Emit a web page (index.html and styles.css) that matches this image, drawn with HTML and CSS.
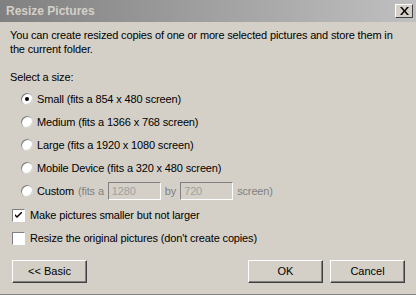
FILE: index.html
```html
<!DOCTYPE html>
<html lang="en">
<head>
    <meta charset="UTF-8">
    <title>Resize Pictures</title>
    <link rel="stylesheet" href="styles.css">
</head>
<body>
    <div class="dialog">
        <div class="titlebar">
            <span class="title">Resize Pictures</span>
            <span class="close">
                <svg width="9" height="8" viewBox="0 0 9 8">
                    <path d="M0 0h2l2.5 3 2.5-3h2l-3.5 4 3.5 4h-2l-2.5-3-2.5 3h-2l3.5-4z" fill="#000"/>
                </svg>
            </span>
        </div>

        <div class="body">
            <p class="intro">You can create resized copies of one or more selected pictures and store them in the current folder.</p>

            <p class="label">Select a size:</p>

            <div class="options">
                <label class="option"><span class="radio checked"></span>Small (fits a 854 x 480 screen)</label>
                <label class="option"><span class="radio"></span>Medium (fits a 1366 x 768 screen)</label>
                <label class="option"><span class="radio"></span>Large (fits a 1920 x 1080 screen)</label>
                <label class="option"><span class="radio"></span>Mobile Device (fits a 320 x 480 screen)</label>
                <label class="option custom">
                    <span class="radio"></span>Custom
                    <span class="muted">(fits a</span>
                    <span class="field">1280</span>
                    <span class="muted">by</span>
                    <span class="field">720</span>
                    <span class="muted">screen)</span>
                </label>
            </div>

            <label class="check-row first"><span class="check checked">
                <svg width="7" height="7" viewBox="0 0 7 7"><path d="M0 2l2 2 5-5v2l-5 5-2-2z" fill="#000"/></svg>
            </span>Make pictures smaller but not larger</label>
            <label class="check-row"><span class="check"></span>Resize the original pictures (don't create copies)</label>

            <div class="buttons">
                <button class="btn">&lt;&lt; Basic</button>
                <span class="spacer"></span>
                <button class="btn">OK</button>
                <button class="btn">Cancel</button>
            </div>
        </div>
    </div>
</body>
</html>
```

FILE: styles.css
```css
html, body {
    margin: 0;
    padding: 0;
}
body {
    width: 416px;
    height: 295px;
    background: #d4d0c8;
    font-family: "Liberation Sans", Arial, sans-serif;
    font-size: 11px;
    letter-spacing: -0.15px;
    color: #000;
    overflow: hidden;
}
.dialog {
    height: 294px;
    border-bottom: 1px solid #808080;
    display: flex;
    flex-direction: column;
}
.titlebar {
    height: 22px;
    background: linear-gradient(to right, #808080, #c0c0c0);
    display: flex;
    align-items: center;
    justify-content: space-between;
    padding: 0 3px 0 6px;
}
.title {
    color: #d4d0c8;
    font-weight: bold;
    font-size: 12px;
    letter-spacing: 0;
}
.close {
    width: 16px;
    height: 12px;
    background: #d4d0c8;
    border: 1px solid;
    border-color: #fff #404040 #404040 #fff;
    display: flex;
    align-items: center;
    justify-content: center;
}
.body {
    padding: 6px 8px 0 10px;
}
.intro {
    margin: 0;
    line-height: 14px;
}
.label {
    margin: 15px 0 0 0;
}
.options {
    padding-left: 11px;
    margin-top: 9px;
    display: flex;
    flex-direction: column;
    gap: 10.2px;
}
.option {
    display: flex;
    align-items: center;
    gap: 4px;
    height: 13px;
}
.radio {
    width: 12px;
    height: 12px;
    border-radius: 50%;
    background: #fff;
    box-shadow: inset 1px 1px 0 #808080, inset -1px -1px 0 #d4d0c8;
    position: relative;
}
.radio.checked::after {
    content: "";
    position: absolute;
    left: 4px;
    top: 4px;
    width: 4px;
    height: 4px;
    border-radius: 50%;
    background: #000;
}
.custom .muted {
    color: #808080;
}
.field {
    width: 48px;
    height: 16px;
    line-height: 16px;
    padding-left: 3px;
    color: #a0a0a0;
    border: 1px solid;
    border-color: #808080 #fff #fff #808080;
}
.check-row {
    display: flex;
    align-items: center;
    gap: 5px;
    margin-top: 10px;
    padding-left: 2px;
}
.check-row.first {
    margin-top: 11px;
}
.check {
    width: 11px;
    height: 11px;
    background: #fff;
    border: 1px solid;
    border-color: #808080 #fff #fff #808080;
    display: flex;
    align-items: center;
    justify-content: center;
}
.buttons {
    display: flex;
    gap: 7px;
    margin-top: 15px;
    padding: 0 3px 0 2px;
}
.spacer {
    flex: 1;
}
.btn {
    width: 75px;
    height: 23px;
    font-family: inherit;
    font-size: 11px;
    letter-spacing: 0;
    background: #d4d0c8;
    border: 1px solid;
    border-color: #fff #404040 #404040 #fff;
    box-shadow: inset -1px -1px 0 #808080;
    padding: 0;
}
```
